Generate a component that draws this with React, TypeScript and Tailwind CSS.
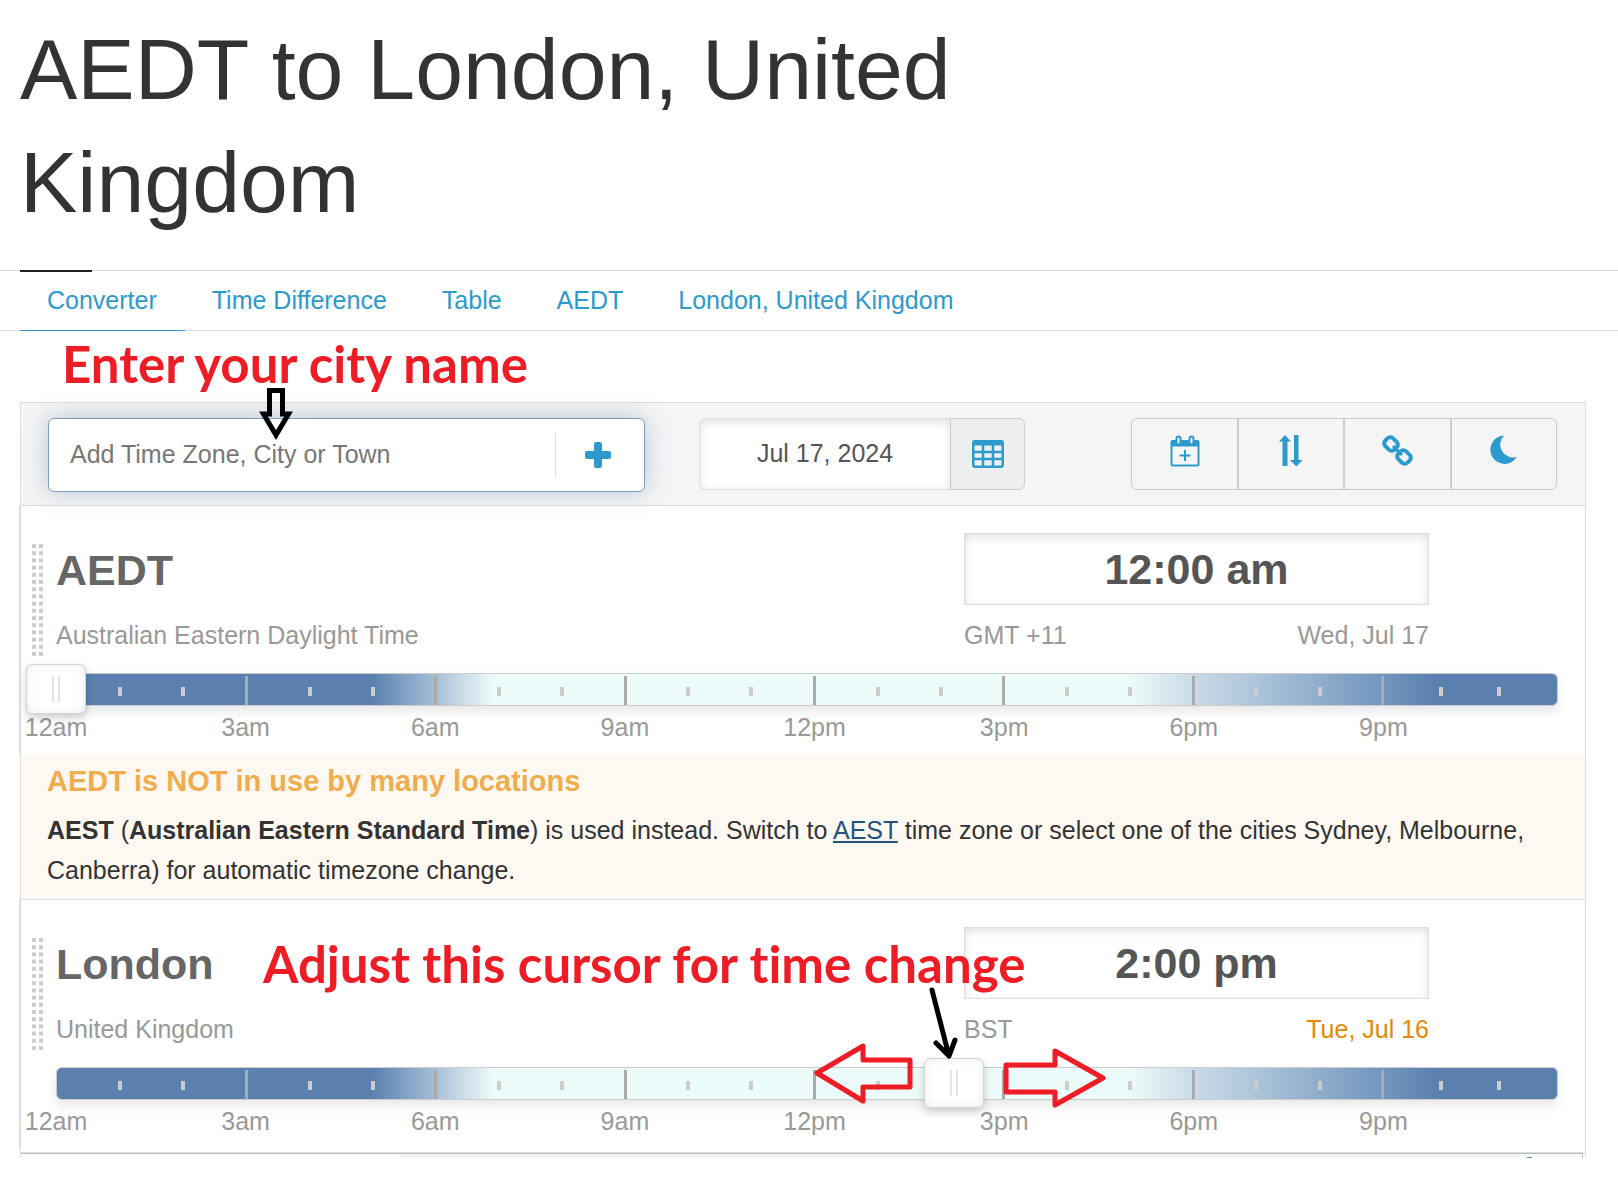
import type { ReactNode } from "react";

const TABS = ["Converter", "Time Difference", "Table", "AEDT", "London, United Kingdom"];
const HOURS = Array.from({ length: 24 }, (_, hour) => hour);
const LABELS = ["12am", "3am", "6am", "9am", "12pm", "3pm", "6pm", "9pm"];
const GRIP_ROWS = Array.from({ length: 16 }, (_, row) => row);

type Zone = {
  name: string;
  detail: string;
  time: string;
  offset: string;
  date: string;
  dateClass: string;
  position: number;
};

const AEDT: Zone = {
  name: "AEDT",
  detail: "Australian Eastern Daylight Time",
  time: "12:00 am",
  offset: "GMT +11",
  date: "Wed, Jul 17",
  dateClass: "text-[#999]",
  position: 0,
};

const LONDON: Zone = {
  name: "London",
  detail: "United Kingdom",
  time: "2:00 pm",
  offset: "BST",
  date: "Tue, Jul 16",
  dateClass: "text-[#e48806]",
  position: 598,
};

function PlusIcon() {
  return (
    <svg width="26" height="26" viewBox="0 0 26 26" fill="currentColor" aria-hidden="true">
      <rect x="9" y="0" width="8" height="26" rx="2" />
      <rect x="0" y="9" width="26" height="8" rx="2" />
    </svg>
  );
}

function TableIcon() {
  return (
    <svg width="32" height="28" viewBox="0 0 32 28" fill="none" stroke="currentColor" strokeWidth="2.5" aria-hidden="true">
      <rect x="1.25" y="1.25" width="29.5" height="25.5" rx="2" />
      <path d="M1 3H31" strokeWidth="5" />
      <path d="M1 12H31M1 19H31M11 4V27M21 4V27" />
    </svg>
  );
}

function CalendarPlusIcon() {
  return (
    <svg width="30" height="32" viewBox="0 0 30 32" fill="none" stroke="currentColor" strokeWidth="2" aria-hidden="true">
      <rect x="1.5" y="6" width="27" height="24.5" rx="1.5" />
      <path d="M1 8.5H29" strokeWidth="6" />
      <rect x="6.5" y="1.5" width="4" height="8" rx="2" fill="#f5f5f5" />
      <rect x="19.5" y="1.5" width="4" height="8" rx="2" fill="#f5f5f5" />
      <path d="M15 15V26M9.5 20.5H20.5" />
    </svg>
  );
}

function SwapIcon() {
  return (
    <svg width="24" height="32" viewBox="0 0 24 32" fill="currentColor" aria-hidden="true">
      <path d="M6 0 12 6.5H8.5V31H3.5V6.5H0Z" />
      <path d="M15 0H19.5V25H23.5L17.5 31.5L11 25H15Z" />
    </svg>
  );
}

function LinkIcon() {
  return (
    <svg width="32" height="32" viewBox="0 0 32 32" fill="none" stroke="currentColor" strokeWidth="4" aria-hidden="true">
      <rect x="2.5" y="3.5" width="13" height="11" rx="4" transform="rotate(45 9 9)" />
      <rect x="15.5" y="16.5" width="13" height="11" rx="4" transform="rotate(45 22 22)" />
      <path d="M11 11 20 20" strokeWidth="3" />
    </svg>
  );
}

function MoonIcon() {
  return (
    <svg width="28" height="30" viewBox="0 0 28 30" fill="currentColor" aria-hidden="true">
      <path d="M14 0.5A14.2 14.2 0 1 0 26.8 21.8A12.8 12.8 0 0 1 14 0.5Z" />
    </svg>
  );
}

function ToolButton({ label, children }: { label: string; children: ReactNode }) {
  return (
    <button
      type="button"
      aria-label={label}
      className="flex h-[72px] flex-1 justify-center border border-[#ccc] pt-4 pl-px text-[#2c9acd] first:rounded-l-md last:rounded-r-md"
    >
      {children}
    </button>
  );
}

function Grip() {
  return (
    <svg width="11" height="114" viewBox="0 0 11 114" fill="#ccc" className="mt-[38px]" aria-hidden="true">
      {GRIP_ROWS.map((row) => (
        <g key={row}>
          <rect x="0" y={row * 7.2} width="4" height="4" />
          <rect x="7" y={row * 7.2} width="4" height="4" />
        </g>
      ))}
    </svg>
  );
}

function TimeSlider({ zone }: { zone: Zone }) {
  return (
    <div className="mr-[27px] ml-[35px]">
      <div className="relative">
        <div className="grid h-[33px] grid-cols-[repeat(21,63fr)_repeat(3,58fr)] rounded-md border border-[#ccc] bg-[linear-gradient(to_right,#5a80af_21%,#a8c0d8_25.3%,#edfafa_29%,#edfafa_71.5%,#c8dae7_76%,#7195bd_88.5%,#5a80af_92%)] shadow-[0_6px_12px_rgba(0,0,0,0.09)]">
          {HOURS.map((hour) => (
            <div key={hour} className="flex w-0 items-center justify-center">
              {hour > 0 &&
                (hour % 3 === 0 ? (
                  <span className="mt-[2px] h-[29px] w-[3px] shrink-0 bg-[#aaa]" />
                ) : (
                  <span className="mt-[4px] h-[9px] w-1 shrink-0 bg-[#ccc]" />
                ))}
            </div>
          ))}
        </div>
        <input
          type="range"
          min={0}
          max={1000}
          defaultValue={zone.position}
          aria-label={`${zone.name} time`}
          className="absolute inset-x-[-30px] top-[-9px] h-[50px] cursor-pointer appearance-none bg-transparent [&::-webkit-slider-thumb]:h-[50px] [&::-webkit-slider-thumb]:w-[60px] [&::-webkit-slider-thumb]:appearance-none [&::-webkit-slider-thumb]:rounded-md [&::-webkit-slider-thumb]:border [&::-webkit-slider-thumb]:border-[#d4d4d4] [&::-webkit-slider-thumb]:bg-white [&::-webkit-slider-thumb]:bg-[linear-gradient(to_right,#e4e4e4_2px,transparent_2px,transparent_6px,#e4e4e4_6px)] [&::-webkit-slider-thumb]:bg-[length:8px_26px] [&::-webkit-slider-thumb]:bg-center [&::-webkit-slider-thumb]:bg-no-repeat [&::-webkit-slider-thumb]:shadow-[inset_0_0_12px_#eee,0_4px_8px_rgba(0,0,0,0.18)]"
        />
      </div>
      <div className="mt-[7px] grid grid-cols-[repeat(7,189fr)_174fr] text-[25px] leading-7 text-[#999]">
        {LABELS.map((label) => (
          <span key={label} className="flex w-0 justify-center">
            {label}
          </span>
        ))}
      </div>
    </div>
  );
}

function ZoneRow({ zone }: { zone: Zone }) {
  return (
    <section className="-ml-0.5 border-l-2 border-[#ddd] pb-[13px]">
      <div className="flex h-[167px] pl-[11px]">
        <Grip />
        <div className="ml-[13px] flex-1">
          <h2 className="mt-[39px] text-[43px] leading-[50px] font-bold text-[#666]">{zone.name}</h2>
          <p className="mt-[26px] text-[25px] leading-7 text-[#999]">{zone.detail}</p>
        </div>
        <div className="mt-[27px] mr-[156px] w-[465px]">
          <input
            type="text"
            defaultValue={zone.time}
            aria-label={`Time in ${zone.name}`}
            className="h-[72px] w-full border border-[#ddd] bg-white text-center text-[43px] font-bold text-[#555] shadow-[inset_0_3px_10px_rgba(0,0,0,0.12)]"
          />
          <div className="mt-4 flex justify-between text-[25px] leading-7 text-[#999]">
            <span>{zone.offset}</span>
            <span className={zone.dateClass}>{zone.date}</span>
          </div>
        </div>
      </div>
      <TimeSlider zone={zone} />
    </section>
  );
}

function Toolbar() {
  return (
    <div className="flex h-[103px] items-start border-b border-[#ddd] bg-[#f5f5f5] pt-[15px] pr-7 pl-[27px]">
      <form className="flex h-[74px] w-[597px] items-center rounded-md border border-[#7f9abb] bg-white shadow-[0_0_24px_rgba(90,128,175,0.4)]">
        <input
          type="text"
          placeholder="Add Time Zone, City or Town"
          aria-label="Add Time Zone, City or Town"
          className="h-full min-w-0 flex-1 bg-transparent pb-0.5 pl-[21px] text-[25px] outline-none placeholder:text-[#777]"
        />
        <button
          type="button"
          aria-label="Add"
          className="flex h-11 w-[89px] items-center justify-center border-l border-[#ddd] pr-1 text-[#2c9acd]"
        >
          <PlusIcon />
        </button>
      </form>
      <div className="ml-[54px] flex h-[72px]">
        <input
          type="text"
          defaultValue="Jul 17, 2024"
          aria-label="Date"
          className="w-[251px] rounded-l-md border border-r-0 border-[#ddd] bg-white text-center text-[25px] text-[#555] shadow-[inset_0_3px_10px_rgba(0,0,0,0.12)]"
        />
        <button
          type="button"
          aria-label="Pick a date"
          className="flex w-[75px] items-center justify-center rounded-r-md border border-[#ccc] bg-[#eceeef] text-[#2c9acd]"
        >
          <TableIcon />
        </button>
      </div>
      <div className="ml-auto flex w-[426px]">
        <ToolButton label="Add to calendar">
          <CalendarPlusIcon />
        </ToolButton>
        <ToolButton label="Swap order">
          <SwapIcon />
        </ToolButton>
        <ToolButton label="Copy link">
          <LinkIcon />
        </ToolButton>
        <ToolButton label="Night mode">
          <MoonIcon />
        </ToolButton>
      </div>
    </div>
  );
}

export default function App() {
  return (
    <div className="bg-white font-['Liberation_Sans',Arial,sans-serif] text-[#333]">
      <h1 className="max-w-[1000px] px-5 pt-[13px] text-[86px] leading-[113px]">
        AEDT to London, United Kingdom
      </h1>

      <nav className="relative mt-[31px] flex border-y border-[#ddd] px-5 text-[25px] leading-7">
        <span className="absolute -top-px left-5 h-0.5 w-[72px] bg-[#222]" />
        {TABS.map((tab, i) => (
          <a
            key={tab}
            href="#"
            className={`-mb-px border-b pr-7 pl-[27px] pt-[15px] pb-4 text-[#2c9acd] ${i === 0 ? "border-[#2c9acd]" : "border-transparent"}`}
          >
            {tab}
          </a>
        ))}
      </nav>

      <p className="h-[71px] pt-[3px] pl-[62px] font-[Lato,sans-serif] text-[51px] leading-[60px] font-bold text-[#ee1c25]">
        Enter your city name
      </p>

      <main className="relative mr-8 ml-5 border border-b-0 border-[#ddd]">
        <Toolbar />
        <svg
          width="34"
          height="56"
          viewBox="0 0 34 56"
          fill="none"
          stroke="#000"
          strokeWidth="5"
          className="absolute -top-[17px] left-[238px]"
          aria-hidden="true"
        >
          <path d="M10.5 4.5H23.5V28H29.5L17 49L4.5 28H10.5Z" />
        </svg>

        <ZoneRow zone={AEDT} />

        <div className="border-b border-[#ddd] bg-[#fdf9f2] px-[26px] pt-[9px] pb-[9px]">
          <h3 className="text-[29px] leading-9 font-bold text-[#f0ad4e]">
            AEDT is NOT in use by many locations
          </h3>
          <p className="mt-[11px] text-[25px] leading-10">
            <b>AEST</b> (<b>Australian Eastern Standard Time</b>) is used instead. Switch to{" "}
            <a href="#" className="text-[#23527c] underline">
              AEST
            </a>{" "}
            time zone or select one of the cities Sydney, Melbourne, Canberra) for automatic timezone
            change.
          </p>
        </div>

        <div className="relative">
          <ZoneRow zone={LONDON} />
          <p className="absolute top-[34px] left-[242px] font-[Lato,sans-serif] text-[51px] leading-[60px] font-bold whitespace-nowrap text-[#ee1c25] [font-variant-ligatures:none]">
            Adjust this cursor for time change
          </p>
          {/* hand-drawn pointers around the slider thumb */}
          <svg
            width="300"
            height="130"
            viewBox="810 985 300 130"
            fill="none"
            strokeWidth="5"
            className="pointer-events-none absolute top-[84px] left-[789px]"
            aria-hidden="true"
          >
            <path
              d="M932 991 949 1057M936 1044 949 1057 955 1041"
              stroke="#000"
              strokeLinecap="round"
              strokeLinejoin="round"
            />
            <path
              d="M817 1074 863 1047V1061H910V1088H863V1102Z"
              stroke="#ee1c25"
              strokeLinejoin="round"
            />
            <path
              d="M1103 1079 1055 1052V1066H1006V1093H1055V1106Z"
              stroke="#ee1c25"
              strokeLinejoin="round"
            />
          </svg>
        </div>

        <div className="mt-1 border-t border-[#ddd]">
          <div className="mr-0.5 flex h-[5px] border-t border-r border-[#bbb]">
            <div className="w-[379px]" />
            <div className="flex-1 bg-[#eff3f5]" />
            <div className="flex w-[63px] items-end bg-[#fafafa] pl-2">
              <span className="h-px w-[5px] bg-[#2c9acd]" />
            </div>
          </div>
        </div>
      </main>
    </div>
  );
}
